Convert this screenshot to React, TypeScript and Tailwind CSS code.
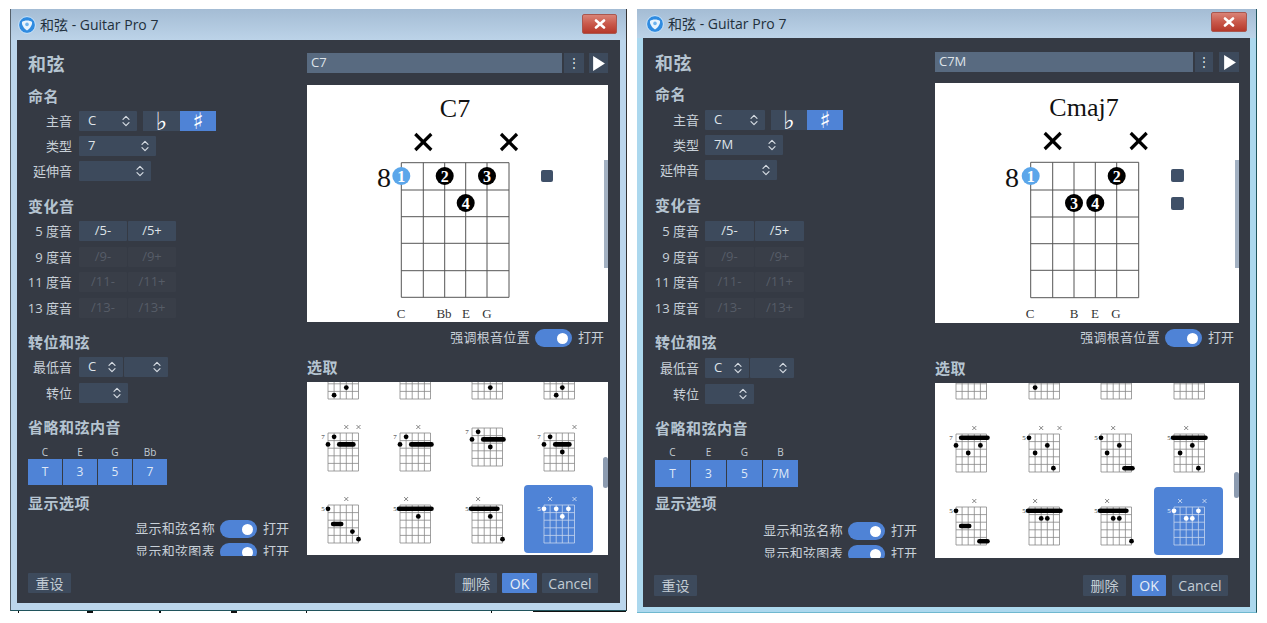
import React from "react";

const FONT = "font-['Open_Sans','Noto_Sans_CJK_SC',sans-serif]";

type Dot = [number, number];
type Bar = [number, number, number];
type ThumbData = { x?: number[]; label?: string; dots?: Dot[]; bars?: Bar[]; dy?: number; selected?: boolean };

function Thumb({ x = [], label, dots = [], bars = [], dy = 0, selected }: ThumbData) {
  const sx = (s: number) => 20 + s * 6.1;
  const fy = (f: number) => 20 + dy + f * 7.6;
  const ink = selected ? "#ffffff" : "#000000";
  const line = selected ? "#c6d6ef" : "#888888";
  return (
    <div className={selected ? "h-full w-full rounded-sm bg-[#4f83d6]" : "h-full w-full"}>
      <svg viewBox="0 0 69 68" className="block h-full w-full">
        {[0, 1, 2, 3, 4, 5].map((i) => (
          <line key={"s" + i} x1={sx(i)} x2={sx(i)} y1={fy(0)} y2={fy(5)} stroke={line} strokeWidth="0.8" />
        ))}
        {[0, 1, 2, 3, 4, 5].map((i) => (
          <line key={"f" + i} x1={20} x2={50.5} y1={fy(i)} y2={fy(i)} stroke={line} strokeWidth="0.8" />
        ))}
        {x.map((s) => (
          <g key={"x" + s} stroke={selected ? "#dfe8f6" : "#666666"} strokeWidth="0.8">
            <line x1={sx(s) - 2} x2={sx(s) + 2} y1={12} y2={16} />
            <line x1={sx(s) + 2} x2={sx(s) - 2} y1={12} y2={16} />
          </g>
        ))}
        {label && (
          <text x={15} y={fy(0) + 6} fontSize="7" textAnchor="middle" fill={selected ? "#ffffff" : "#333333"} fontFamily="Liberation Serif, serif">
            {label}
          </text>
        )}
        {bars.map(([a, b, f], i) => (
          <line key={"b" + i} x1={sx(a) - 1} x2={sx(b) + 1} y1={fy(f) + 3.8} y2={fy(f) + 3.8} stroke={ink} strokeWidth="4.6" strokeLinecap="round" />
        ))}
        {dots.map(([s, f], i) => (
          <circle key={"d" + i} cx={sx(s)} cy={fy(f) + 3.8} r="2.4" fill={ink} />
        ))}
      </svg>
    </div>
  );
}

function Updown() {
  return (
    <svg viewBox="0 0 8 12" className="h-[12px] w-[8px] shrink-0" fill="none" stroke="#d5dbe2" strokeWidth="1.2" strokeLinecap="round" strokeLinejoin="round">
      <path d="M1 4.4 4 1.4l3 3" />
      <path d="M1 7.6l3 3 3-3" />
    </svg>
  );
}

function Select({ value, className }: { value?: string; className: string }) {
  return (
    <div className={"flex h-full items-center justify-between rounded-[1px] bg-[#3d4a5c] pl-[9px] pr-[7px] text-[13px] text-[#dfe4e9] " + className}>
      <span>{value}</span>
      <Updown />
    </div>
  );
}

function Row({ label, className, children }: { label: string; className: string; children: React.ReactNode }) {
  return (
    <div className={"flex h-[20px] items-center " + className}>
      <div className="w-[44px] whitespace-nowrap text-right text-[13px] leading-[20px] text-[#c8d0d8] [direction:rtl]">
        <span className="[direction:ltr] [unicode-bidi:isolate]">{label}</span>
      </div>
      <div className="ml-[7px] flex h-full gap-px">{children}</div>
    </div>
  );
}

function Heading({ className, children }: { className: string; children: React.ReactNode }) {
  return <div className={"h-[20px] text-[15px] font-bold leading-[20px] tracking-[0.5px] text-[#b5c4d1] " + className}>{children}</div>;
}

function Alter({ label, on, w }: { label: string; on?: boolean; w: string }) {
  return (
    <div className={"flex h-full items-center justify-center rounded-[1px] text-[13px] " + w + (on ? " bg-[#3d4a5c] text-[#dfe4e9]" : " bg-[#393e48] text-[#565c67]")}>
      {label}
    </div>
  );
}

function Toggle({ label, className }: { label: string; className: string }) {
  return (
    <div className={"flex h-[18px] items-center justify-end text-[13px] text-[#c8d0d8] " + className}>
      <span className="whitespace-nowrap tracking-[0.3px]">{label}</span>
      <div className="ml-[5px] flex h-[18px] w-[37px] items-center justify-end rounded-full bg-[#4f83d6] pr-[4px]">
        <div className="h-[11px] w-[11px] rounded-full bg-white" />
      </div>
      <span className="ml-[6px] whitespace-nowrap">打开</span>
    </div>
  );
}

function FooterButton({ label, className }: { label: string; className: string }) {
  return <div className={"flex h-full items-center justify-center rounded-[1px] text-[14px] " + className}>{label}</div>;
}

function Accidentals({ flat, sharp }: { flat: string; sharp: string }) {
  return (
    <div className="ml-[5px] flex h-full">
      <div className={"flex h-full items-center justify-center bg-[#3d4a5c] font-['DejaVu_Sans'] text-[25px] font-bold leading-none text-white " + flat}>♭</div>
      <div className={"flex h-full items-center justify-center bg-[#4f83d6] font-['DejaVu_Sans'] text-[23px] font-bold leading-none text-white " + sharp}>♯</div>
    </div>
  );
}

type Finger = { s: number; y: number; n: string; blue?: boolean };
type ChordProps = {
  w: number; h: number; strings: number[]; frets: number[]; title: string; titleX: number; titleY: number;
  crossY: number; eightY: number; fingers: Finger[]; squares: { x: number; y: number; size: number }[];
  notes: [string, number][]; noteY: number;
};

function Chord({ w, h, strings, frets, title, titleX, titleY, crossY, eightY, fingers, squares, notes, noteY }: ChordProps) {
  return (
    <svg viewBox={`0 0 ${w} ${h}`} className="block h-full w-full" fontFamily="Liberation Serif, serif">
      <text x={titleX} y={titleY} fontSize="26" textAnchor="middle" fill="#111111">{title}</text>
      {[strings[1], strings[5]].map((cx) => (
        <g key={cx} stroke="#000000" strokeWidth="3.2">
          <line x1={cx - 8} x2={cx + 8} y1={crossY - 8} y2={crossY + 8} />
          <line x1={cx + 8} x2={cx - 8} y1={crossY - 8} y2={crossY + 8} />
        </g>
      ))}
      {strings.map((sx, i) => (
        <line key={"s" + i} x1={sx} x2={sx} y1={frets[0]} y2={frets[5]} stroke="#555555" strokeWidth="1" />
      ))}
      {frets.map((fy, i) => (
        <line key={"f" + i} x1={strings[0]} x2={strings[5]} y1={fy} y2={fy} stroke="#555555" strokeWidth="1" />
      ))}
      <text x={77} y={eightY} fontSize="28" textAnchor="middle" fill="#111111">8</text>
      {fingers.map((f) => (
        <g key={f.n}>
          <circle cx={strings[f.s]} cy={f.y} r="9" fill={f.blue ? "#5ba6ea" : "#000000"} />
          <text x={strings[f.s]} y={f.y + 5.5} fontSize="16" fontWeight="bold" textAnchor="middle" fill="#ffffff">{f.n}</text>
        </g>
      ))}
      {squares.map((q) => (
        <rect key={q.y} x={q.x} y={q.y} width={q.size} height={q.size} rx="2" fill="#3f5068" />
      ))}
      {notes.map(([n, sx]) => (
        <text key={n} x={sx} y={noteY} fontSize="13" textAnchor="middle" fill="#333333">{n}</text>
      ))}
    </svg>
  );
}

function TitleBar({ className, closeClass }: { className: string; closeClass: string }) {
  return (
    <div className={"flex items-center bg-gradient-to-b from-[#a4bcd4] to-[#bcd3e8] " + className}>
      <svg viewBox="0 0 18 18" className="h-[18px] w-[18px] shrink-0">
        <circle cx="9" cy="9" r="8.4" fill="#2f8be0" stroke="#cfe6fa" strokeWidth="1" />
        <path d="M4 6c2-2 8-2 10 0 .6 3-2.400 7-5 8.400C6.400 13 3.400 9 4 6z" fill="#e9f4fd" />
        <circle cx="9" cy="8.4" r="1.800" fill="#6db3ee" />
      </svg>
      <span className="ml-[4px] whitespace-nowrap text-[14px] text-[#22303c]">和弦 - Guitar Pro 7</span>
      <div className={"ml-auto flex h-[20px] items-center justify-center rounded-[2px] border border-[#a9574f] bg-gradient-to-b from-[#d98377] via-[#c9584a] to-[#b5382a] " + closeClass}>
        <svg viewBox="0 0 12 10" className="h-[10px] w-[12px]" stroke="#ffffff" strokeWidth="2.6" strokeLinecap="round">
          <line x1="2" y1="1.500" x2="10" y2="8.500" />
          <line x1="10" y1="1.500" x2="2" y2="8.500" />
        </svg>
      </div>
    </div>
  );
}

const leftThumbs: ThumbData[] = [
  { dots: [[3, 3], [1, 4]] },
  {},
  { dots: [[3, 3]] },
  { dots: [[3, 3], [2, 4]] },
  { x: [3, 5], label: "7", dots: [[1, 0], [0, 1]], bars: [[2, 4, 1]] },
  { x: [3], label: "7", dots: [[1, 0], [0, 1]], bars: [[2, 5, 1]] },
  { label: "7", dy: -5, dots: [[1, 0], [0, 1], [3, 2]], bars: [[2, 5, 1]] },
  { x: [5], label: "7", dots: [[1, 0], [0, 1], [3, 2]], bars: [[2, 4, 1]] },
  { x: [3], label: "5", dots: [[0, 0], [4, 3], [5, 4]], bars: [[1, 2, 2]] },
  { x: [1], label: "5", dots: [[3, 1]], bars: [[0, 5, 0]] },
  { x: [1], label: "5", dots: [[3, 1], [5, 4]], bars: [[0, 4, 0]] },
  { x: [1, 5], label: "5", dots: [[0, 0], [2, 0], [4, 0], [3, 1]], selected: true },
];

const rightThumbs: ThumbData[] = [
  {},
  { dots: [[1, 3]] },
  {},
  {},
  { x: [3], label: "7", dots: [[0, 1], [4, 1], [2, 2]], bars: [[1, 5, 0]] },
  { x: [2, 5], label: "5", dots: [[0, 0], [3, 1], [1, 2], [4, 4]] },
  { x: [2], label: "5", dots: [[0, 0], [3, 1], [1, 2]], bars: [[4, 5, 4]] },
  { x: [2], label: "5", dots: [[3, 1], [1, 2], [4, 4]], bars: [[0, 5, 0]] },
  { x: [3], label: "5", dots: [[0, 0]], bars: [[1, 2, 2], [4, 5, 4]] },
  { x: [1], label: "5", dots: [[2, 1], [3, 1]], bars: [[0, 5, 0]] },
  { x: [1], label: "5", dots: [[2, 1], [3, 1], [5, 4]], bars: [[0, 4, 0]] },
  { x: [1, 5], label: "5", dots: [[0, 0], [2, 1], [3, 1], [4, 0]], selected: true },
];

const Notes = ({ w, names }: { w: string; names: string[] }) => (
  <>
    {names.map((n) => (
      <div key={n} className={"text-center text-[10px] leading-[14px] text-[#c3ccd4] " + w}>{n}</div>
    ))}
  </>
);

export default function App() {
  return (
    <div className={"flex h-[623px] w-[1267px] items-start overflow-hidden bg-white " + FONT}>
      {/* left window */}
      <div className="ml-[10px] mt-[9px] flex w-[617px] flex-col">
        <div className="flex h-[602px] flex-col border-l border-r border-b border-l-[#55606a] border-r-[#333333] border-b-[#20545c] bg-[#bcd6ec]">
          <TitleBar className="h-[31px] shrink-0 pl-[7px] pr-[9px]" closeClass="w-[35px] mb-[2px]" />
          <div className="mx-[6px] flex h-[563px] flex-col bg-[#353a44]">
            <div className="flex h-[516px]">
              <div className="h-full w-[290px] shrink-0 overflow-hidden pl-[11px]">
                <div className="mt-[12px] h-[24px] text-[18px] font-bold leading-[24px] tracking-[0.5px] text-[#b5c4d1]">和弦</div>
                <Heading className="mt-[10px]">命名</Heading>
                <Row label="主音" className="mt-[5px]">
                  <Select value="C" className="w-[58px]" />
                  <Accidentals flat="w-[37px]" sharp="w-[36px]" />
                </Row>
                <Row label="类型" className="mt-[5px]"><Select value="7" className="w-[77px]" /></Row>
                <Row label="延伸音" className="mt-[5px]"><Select className="w-[72px]" /></Row>
                <Heading className="mt-[15px]">变化音</Heading>
                <Row label="5 度音" className="mt-[5px]"><Alter on label="/5-" w="w-[48px]" /><Alter on label="/5+" w="w-[48px]" /></Row>
                <Row label="9 度音" className="mt-[6px]"><Alter label="/9-" w="w-[48px]" /><Alter label="/9+" w="w-[48px]" /></Row>
                <Row label="11 度音" className="mt-[5px]"><Alter label="/11-" w="w-[48px]" /><Alter label="/11+" w="w-[48px]" /></Row>
                <Row label="13 度音" className="mt-[6px]"><Alter label="/13-" w="w-[48px]" /><Alter label="/13+" w="w-[48px]" /></Row>
                <Heading className="mt-[14px]">转位和弦</Heading>
                <Row label="最低音" className="mt-[5px]"><Select value="C" className="w-[44px]" /><Select className="w-[44px]" /></Row>
                <Row label="转位" className="mt-[6px]"><Select className="w-[49px]" /></Row>
                <Heading className="mt-[14px]">省略和弦内音</Heading>
                <div className="mt-[8px] flex gap-px"><Notes w="w-[34px]" names={["C", "E", "G", "Bb"]} /></div>
                <div className="flex h-[26px] gap-px">
                  {["T", "3", "5", "7"].map((n) => (
                    <div key={n} className="flex w-[34px] items-center justify-center bg-[#4f83d6] text-[12px] text-[#dfe8f6]">{n}</div>
                  ))}
                </div>
                <Heading className="mt-[8px]">显示选项</Heading>
                <Toggle label="显示和弦名称" className="mt-[7px] pr-[18px]" />
                <Toggle label="显示和弦图表" className="mt-[5px] pr-[18px]" />
              </div>
              <div className="w-[301px] shrink-0">
                <div className="mt-[13px] flex h-[20px]">
                  <div className="flex w-[255px] items-center bg-[#586a80] pl-[4px] text-[13px] text-[#dfe4e9]">C7</div>
                  <div className="ml-[2px] flex w-[20px] items-center justify-center bg-[#3d4a5c] text-[12px] leading-none text-[#dfe4e9]">⋮</div>
                  <div className="ml-[5px] flex w-[19px] items-center justify-center bg-[#3d4a5c]">
                    <svg viewBox="0 0 12 14" className="h-[15px] w-[13px]"><path d="M1 0 12 7 1 14z" fill="#ffffff" /></svg>
                  </div>
                </div>
                <div className="relative mt-[12px] h-[237px] bg-white">
                  <Chord w={301} h={237} strings={[94.3, 116.3, 137.7, 158.7, 180, 202]} frets={[77.7, 105, 131.7, 158.3, 185.7, 212.3]} title="C7" titleX={148} titleY={32} crossY={57} eightY={102}
                    fingers={[{ s: 0, y: 91, n: "1", blue: true }, { s: 2, y: 91, n: "2" }, { s: 4, y: 91, n: "3" }, { s: 3, y: 118, n: "4" }]}
                    squares={[{ x: 234, y: 85, size: 12 }]}
                    notes={[["C", 94], ["Bb", 137], ["E", 159], ["G", 180]]} noteY={233} />
                  <div className="absolute right-0 top-[75px] h-[108px] w-[4px] bg-[#a3b1c2]" />
                </div>
                <Toggle label="强调根音位置" className="mt-[7px] pr-[4px]" />
                <Heading className="mt-[10px]">选取</Heading>
                <div className="relative mt-[5px] h-[173px] overflow-hidden bg-white pl-px">
                  <div className="-mt-[41px] grid grid-cols-[repeat(4,69px)] grid-rows-[repeat(3,68px)] gap-x-[3px] gap-y-[4px]">
                    {leftThumbs.map((t, i) => <Thumb key={i} {...t} />)}
                  </div>
                  <div className="absolute right-0 top-[75px] h-[31px] w-[5px] rounded-sm bg-[#8c9bb0]" />
                </div>
              </div>
            </div>
            <div className="mt-[17px] flex h-[20px] pl-[11px] pr-[22px]">
              <FooterButton label="重设" className="w-[43px] bg-[#3d4a5c] text-[#c3ccd4]" />
              <div className="ml-auto flex h-full gap-[5px]">
                <FooterButton label="删除" className="w-[42px] bg-[#3d4a5c] text-[#c3ccd4]" />
                <FooterButton label="OK" className="w-[35px] bg-[#4f83d6] text-[#e8eef7]" />
                <FooterButton label="Cancel" className="w-[56px] bg-[#3d4a5c] text-[#c3ccd4]" />
              </div>
            </div>
          </div>
        </div>
        <svg viewBox="0 0 617 3" className="block h-[3px] w-[617px]" fill="#111111">
          <rect x="8" width="1" height="2" />
          <rect x="77" width="6" height="2" />
          <rect x="149" width="2" height="2" />
          <rect x="221" width="6" height="2" />
          <rect x="296" width="1" height="2" />
          <rect x="481" width="1" height="2" />
          <rect x="523" width="93" height="1" />
        </svg>
      </div>

      {/* right window */}
      <div className="ml-[10px] mt-[9px] flex h-[604px] w-[620px] flex-col border-r border-b border-r-[#20545c] border-b-[#6fb8cf] bg-[#acd8ee]">
        <TitleBar className="h-[29px] shrink-0 pl-[9px] pr-[9px]" closeClass="w-[36px] mb-[3px]" />
        <div className="ml-[6px] flex h-[569px] w-[607px] flex-col bg-[#353a44]">
          <div className="flex h-[520px]">
            <div className="h-full w-[292px] shrink-0 overflow-hidden pl-[12px]">
              <div className="mt-[13px] h-[24px] text-[18px] font-bold leading-[24px] tracking-[0.5px] text-[#b5c4d1]">和弦</div>
              <Heading className="mt-[9px]">命名</Heading>
              <Row label="主音" className="mt-[6px] [&>div:last-child]:ml-[6px]">
                <Select value="C" className="w-[60px]" />
                <Accidentals flat="w-[36px]" sharp="w-[36px]" />
              </Row>
              <Row label="类型" className="mt-[5px] [&>div:last-child]:ml-[6px]"><Select value="7M" className="w-[78px]" /></Row>
              <Row label="延伸音" className="mt-[5px] [&>div:last-child]:ml-[6px]"><Select className="w-[72px]" /></Row>
              <Heading className="mt-[15px]">变化音</Heading>
              <Row label="5 度音" className="mt-[6px] [&>div:last-child]:ml-[6px]"><Alter on label="/5-" w="w-[49px]" /><Alter on label="/5+" w="w-[49px]" /></Row>
              <Row label="9 度音" className="mt-[6px] [&>div:last-child]:ml-[6px]"><Alter label="/9-" w="w-[49px]" /><Alter label="/9+" w="w-[49px]" /></Row>
              <Row label="11 度音" className="mt-[5px] [&>div:last-child]:ml-[6px]"><Alter label="/11-" w="w-[49px]" /><Alter label="/11+" w="w-[49px]" /></Row>
              <Row label="13 度音" className="mt-[6px] [&>div:last-child]:ml-[6px]"><Alter label="/13-" w="w-[49px]" /><Alter label="/13+" w="w-[49px]" /></Row>
              <Heading className="mt-[14px]">转位和弦</Heading>
              <Row label="最低音" className="mt-[6px] [&>div:last-child]:ml-[6px]"><Select value="C" className="w-[44px]" /><Select className="w-[44px]" /></Row>
              <Row label="转位" className="mt-[6px] [&>div:last-child]:ml-[6px]"><Select className="w-[49px]" /></Row>
              <Heading className="mt-[14px]">省略和弦内音</Heading>
              <div className="mt-[7px] flex gap-px"><Notes w="w-[35px]" names={["C", "E", "G", "B"]} /></div>
              <div className="mt-px flex h-[27px] gap-px">
                {["T", "3", "5", "7M"].map((n) => (
                  <div key={n} className="flex w-[35px] items-center justify-center bg-[#4f83d6] text-[12px] text-[#dfe8f6]">{n}</div>
                ))}
              </div>
              <Heading className="mt-[6px]">显示选项</Heading>
              <Toggle label="显示和弦名称" className="mt-[9px] pr-[18px]" />
              <Toggle label="显示和弦图表" className="mt-[5px] pr-[18px]" />
            </div>
            <div className="w-[304px] shrink-0">
              <div className="mt-[14px] flex h-[20px]">
                <div className="flex w-[258px] items-center bg-[#586a80] pl-[4px] text-[13px] text-[#dfe4e9]">C7M</div>
                <div className="ml-[2px] flex w-[18px] items-center justify-center bg-[#3d4a5c] text-[12px] leading-none text-[#dfe4e9]">⋮</div>
                <div className="ml-[6px] flex w-[20px] items-center justify-center bg-[#3d4a5c]">
                  <svg viewBox="0 0 12 14" className="h-[15px] w-[13px]"><path d="M1 0 12 7 1 14z" fill="#ffffff" /></svg>
                </div>
              </div>
              <div className="relative mt-[11px] h-[240px] bg-white">
                <Chord w={304} h={240} strings={[95.7, 117.7, 139, 160.3, 181.7, 203.7]} frets={[79.3, 107, 134, 160.7, 187.3, 214.7]} title="Cmaj7" titleX={149} titleY={33} crossY={58} eightY={104}
                  fingers={[{ s: 0, y: 93, n: "1", blue: true }, { s: 4, y: 93, n: "2" }, { s: 2, y: 120, n: "3" }, { s: 3, y: 120, n: "4" }]}
                  squares={[{ x: 236, y: 86, size: 13 }, { x: 236, y: 114, size: 13 }]}
                  notes={[["C", 95], ["B", 139], ["E", 160], ["G", 181]]} noteY={235} />
                <div className="absolute right-0 top-[77px] h-[108px] w-[4px] bg-[#a3b1c2]" />
              </div>
              <Toggle label="强调根音位置" className="mt-[6px] pr-[5px]" />
              <Heading className="mt-[11px]">选取</Heading>
              <div className="relative mt-[5px] h-[175px] overflow-hidden bg-white pl-px">
                <div className="-mt-[42px] grid grid-cols-[repeat(4,69px)] grid-rows-[repeat(3,68px)] gap-x-[3.5px] gap-y-[5px]">
                  {rightThumbs.map((t, i) => <Thumb key={i} {...t} />)}
                </div>
                <div className="absolute right-0 top-[89px] h-[26px] w-[5px] rounded-sm bg-[#8c9bb0]" />
              </div>
            </div>
          </div>
          <div className="mt-[17px] flex h-[21px] pl-[11px] pr-[22px]">
            <FooterButton label="重设" className="w-[43px] bg-[#3d4a5c] text-[#c3ccd4]" />
            <div className="ml-auto flex h-full gap-[6px]">
              <FooterButton label="删除" className="w-[43px] bg-[#3d4a5c] text-[#c3ccd4]" />
              <FooterButton label="OK" className="w-[34px] bg-[#4f83d6] text-[#e8eef7]" />
              <FooterButton label="Cancel" className="w-[56px] bg-[#3d4a5c] text-[#c3ccd4]" />
            </div>
          </div>
        </div>
      </div>
    </div>
  );
}
